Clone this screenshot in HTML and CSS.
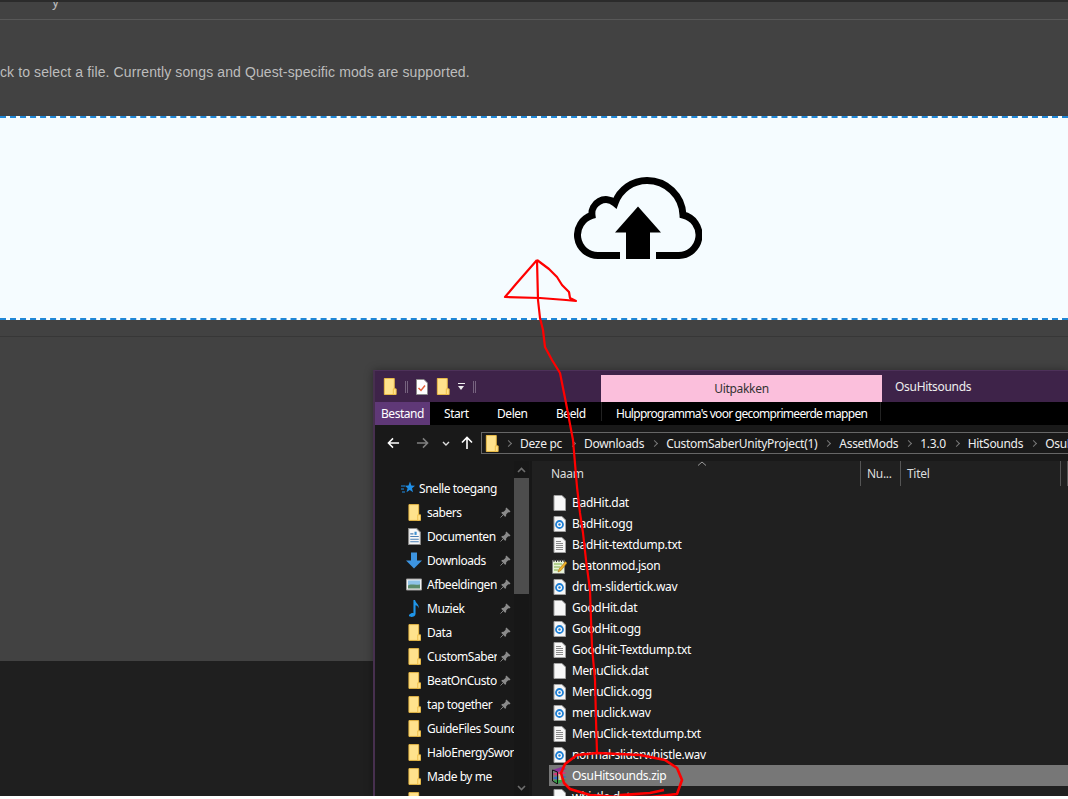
FILE: index.html
```html
<!DOCTYPE html>
<html>
<head>
  <title>Upload</title>
  <link rel="stylesheet" href="styles.css">
</head>
<body>
  <svg class="icon-defs">
    <symbol id="i-folder" viewBox="0 0 14 18">
      <path d="M1 .5h10.500v17H1z" fill="#ffe28c" stroke="#eebd45"/>
      <path d="M10.500 11.500h3v6h-3z" fill="#ffe28c" stroke="#eebd45"/>
    </symbol>
    <symbol id="i-blank" viewBox="0 0 14 16">
      <path d="M1.500.5h8l3.500 3.500v11.500h-11.500z" fill="#f7f7f7" stroke="#a0a0a0"/>
    </symbol>
    <symbol id="i-audio" viewBox="0 0 14 16">
      <path d="M1.500.5h8l3.500 3.500v11.500h-11.500z" fill="#f7f7f7" stroke="#a0a0a0"/>
      <circle cx="7" cy="8.500" r="3.500" fill="none" stroke="#1c7fd6" stroke-width="1.800"/>
      <circle cx="7" cy="8.500" r="1.200" fill="#1c7fd6"/>
    </symbol>
    <symbol id="i-text" viewBox="0 0 14 16">
      <path d="M1.500.5h8l3.500 3.500v11.500h-11.500z" fill="#f7f7f7" stroke="#a0a0a0"/>
      <path d="M3.500 4.500h5M3.500 6.500h7M3.500 8.500h7M3.500 10.500h7M3.500 12.500h7" stroke="#8a8a8a"/>
    </symbol>
    <symbol id="i-json" viewBox="0 0 15 16">
      <path d="M.5 2.500h12v13h-12z" fill="#e8f3d8" stroke="#7d7d7d"/>
      <path d="M2 1v3M4.500 1v3M7 1v3M9.500 1v3M12 1v3" stroke="#333"/>
      <path d="M2 6h8M2 9h6M2 12h4" stroke="#7fae45"/>
      <path d="M13.500 3.500 7 11l-1 3 3-1.500L15 5z" fill="#f0b429" stroke="#a06c10" stroke-width=".6"/>
    </symbol>
    <symbol id="i-rar" viewBox="0 0 16 17">
      <path d="M1 3l9-3 5 2-9 3z" fill="#8a2f9c"/>
      <path d="M1 7l9-3 5 2-9 3z" fill="#d8327a"/>
      <path d="M1 11l9-3 5 2-9 3z" fill="#2a6fd0"/>
      <path d="M1 14l9-3 5 2-9 4z" fill="#3aa04a"/>
      <path d="M1 3v11l5 3V5z" fill="none" stroke="#111"/>
      <path d="M7 7h3v6H7z" fill="#d9c28a"/>
    </symbol>
    <symbol id="i-doc" viewBox="0 0 12 16">
      <path d="M.5.5h7.500l3.500 3.500v11.500h-11z" fill="#f7f7f7" stroke="#8d8d8d"/>
      <path d="M2 5.500h3M2 8h8M2 10.500h8M2 13h8" stroke="#4a7fb5"/>
      <path d="M6 3.500h2v3h-2z" fill="#3b8ed0"/>
    </symbol>
    <symbol id="i-check" viewBox="0 0 12 16">
      <path d="M.5.5h7.500l3.500 3.500v11.500h-11z" fill="#fff" stroke="#8d8d8d"/>
      <path d="M2.500 9l2.500 2.500 4-5" fill="none" stroke="#e2603a" stroke-width="1.500"/>
    </symbol>
    <symbol id="i-pin" viewBox="0 0 12 12">
      <path d="M7 .5 11.500 5 10 6 9 5.800 6.800 8 6.600 10 5.500 10.500 1.500 6.500 2 5.400 4 5.200 6.200 3 6 2z" fill="#8a8a8a"/>
      <path d="M3.500 8.500.5 11.500" stroke="#8a8a8a"/>
    </symbol>
    <symbol id="i-star" viewBox="0 0 14 14">
      <path d="M9 .5l1.300 4 3.700.2-3 2.500 1 4-3.200-2.300-3.300 2.300 1.100-4-2.800-2.500 3.700-.2z" fill="#1f8fe8"/>
      <path d="M0 5h4M0 8h3M1 11h3" stroke="#1f8fe8"/>
    </symbol>
    <symbol id="i-down" viewBox="0 0 16 16">
      <path d="M5 0h6v8h5l-8 8-8-8h5z" fill="#3d94e0"/>
    </symbol>
    <symbol id="i-image" viewBox="0 0 16 12">
      <path d="M.5.5h15v11H.5z" fill="#f2f2f2" stroke="#9a9a9a"/>
      <path d="M2 2h12v5H2z" fill="#8fc3e8"/>
      <path d="M2 10V7c3-2 6 0 12-1v4z" fill="#5b8a6a"/>
    </symbol>
    <symbol id="i-music" viewBox="0 0 12 16">
      <path d="M5 0h1.500c.5 3 4 4 3.500 8-.5-2-2-3-3-3v8c0 2-2 3-4 3S0 14.500 1.500 13.500 4 12 5 12.500z" fill="#1f95e8"/>
    </symbol>
  </svg>

  <div class="page">
    <div class="top-strip"><span class="cut-word">y</span></div>
    <section class="panel">
      <p class="hint">ck to select a file. Currently songs and Quest-specific mods are supported.</p>
      <div class="dropzone">
        <svg class="cloud" viewBox="0 0 128 82">
          <path d="M46 78.500H24A20.500 20.500 0 0 1 18 38.400A14 14 0 0 1 41 26A34 34 0 0 1 73 3.500A36 36 0 0 1 109 38A20.500 20.500 0 0 1 104 78.500H82" fill="none" stroke="#000" stroke-width="7"/>
          <path d="M64 29.500 87 55.500H76V82H52V55.500H41z" fill="#000"/>
        </svg>
      </div>
      <div class="panel-rule"></div>
    </section>
    <div class="footer-band"></div>
  </div>

  <div class="explorer">
    <header class="titlebar">
      <div class="quick-bar">
        <svg class="ic-qa"><use href="#i-folder"/></svg>
        <span class="qa-sep"></span>
        <svg class="ic-qa-doc"><use href="#i-check"/></svg>
        <svg class="ic-qa"><use href="#i-folder"/></svg>
        <span class="qa-drop"></span>
        <span class="qa-sep"></span>
      </div>
      <div class="context-tab">Uitpakken</div>
      <div class="window-title">OsuHitsounds</div>
    </header>

    <nav class="ribbon">
      <span class="tab tab-file">Bestand</span>
      <span class="tab tab-start">Start</span>
      <span class="tab tab-share">Delen</span>
      <span class="tab tab-view">Beeld</span>
      <span class="tab tab-tools">Hulpprogramma's voor gecomprimeerde mappen</span>
    </nav>

    <div class="addressbar">
      <div class="nav-buttons">
        <svg class="nav-arrow" viewBox="0 0 14 12"><path d="M13 6H2M6.500 1 1.500 6l5 5" fill="none" stroke="#fff" stroke-width="1.600"/></svg>
        <svg class="nav-arrow nav-forward" viewBox="0 0 14 12"><path d="M1 6h11M7.500 1l5 5-5 5" fill="none" stroke="#808080" stroke-width="1.600"/></svg>
        <svg class="nav-more" viewBox="0 0 8 5"><path d="M1 1l3 3 3-3" fill="none" stroke="#ddd" stroke-width="1.400"/></svg>
        <svg class="nav-up" viewBox="0 0 12 14"><path d="M6 13V2M1 6.500l5-5 5 5" fill="none" stroke="#fff" stroke-width="1.600"/></svg>
      </div>
      <div class="crumbs">
        <svg class="ic-crumb"><use href="#i-folder"/></svg>
        <span class="chev"></span><span>Deze pc</span>
        <span class="chev"></span><span>Downloads</span>
        <span class="chev"></span><span>CustomSaberUnityProject(1)</span>
        <span class="chev"></span><span>AssetMods</span>
        <span class="chev"></span><span>1.3.0</span>
        <span class="chev"></span><span>HitSounds</span>
        <span class="chev"></span><span>OsuHitsounds</span>
      </div>
    </div>

    <div class="main">
      <aside class="sidebar">
        <ul class="tree">
          <li class="tree-row tree-head"><svg class="ic-star"><use href="#i-star"/></svg><span class="tree-label">Snelle toegang</span></li>
          <li class="tree-row"><svg class="ic-tree"><use href="#i-folder"/></svg><span class="tree-label">sabers</span><svg class="ic-pin"><use href="#i-pin"/></svg></li>
          <li class="tree-row"><svg class="ic-tree"><use href="#i-doc"/></svg><span class="tree-label">Documenten</span><svg class="ic-pin"><use href="#i-pin"/></svg></li>
          <li class="tree-row"><svg class="ic-tree ic-wide"><use href="#i-down"/></svg><span class="tree-label">Downloads</span><svg class="ic-pin"><use href="#i-pin"/></svg></li>
          <li class="tree-row"><svg class="ic-tree ic-wide"><use href="#i-image"/></svg><span class="tree-label">Afbeeldingen</span><svg class="ic-pin"><use href="#i-pin"/></svg></li>
          <li class="tree-row"><svg class="ic-tree"><use href="#i-music"/></svg><span class="tree-label">Muziek</span><svg class="ic-pin"><use href="#i-pin"/></svg></li>
          <li class="tree-row"><svg class="ic-tree"><use href="#i-folder"/></svg><span class="tree-label">Data</span><svg class="ic-pin"><use href="#i-pin"/></svg></li>
          <li class="tree-row"><svg class="ic-tree"><use href="#i-folder"/></svg><span class="tree-label">CustomSabers</span><svg class="ic-pin"><use href="#i-pin"/></svg></li>
          <li class="tree-row"><svg class="ic-tree"><use href="#i-folder"/></svg><span class="tree-label">BeatOnCustom</span><svg class="ic-pin"><use href="#i-pin"/></svg></li>
          <li class="tree-row"><svg class="ic-tree"><use href="#i-folder"/></svg><span class="tree-label">tap together</span><svg class="ic-pin"><use href="#i-pin"/></svg></li>
          <li class="tree-row"><svg class="ic-tree"><use href="#i-folder"/></svg><span class="tree-label">GuideFiles Sounds</span></li>
          <li class="tree-row"><svg class="ic-tree"><use href="#i-folder"/></svg><span class="tree-label">HaloEnergySword</span></li>
          <li class="tree-row"><svg class="ic-tree"><use href="#i-folder"/></svg><span class="tree-label">Made by me</span></li>
          <li class="tree-row"><svg class="ic-tree"><use href="#i-folder"/></svg><span class="tree-label"></span></li>
        </ul>
        <div class="tree-scroll">
          <svg class="scroll-arrow" viewBox="0 0 9 6"><path d="M1 5l3.500-3.500L8 5" fill="none" stroke="#6e6e6e" stroke-width="1.600"/></svg>
          <div class="scroll-thumb"></div>
          <svg class="scroll-arrow scroll-bottom" viewBox="0 0 9 6"><path d="M1 1l3.500 3.500L8 1" fill="none" stroke="#6e6e6e" stroke-width="1.600"/></svg>
        </div>
      </aside>

      <section class="files">
        <div class="file-head">
          <svg class="sort-mark" viewBox="0 0 10 5"><path d="M1 4.500 5 1l4 3.500" fill="none" stroke="#999"/></svg>
          <span class="col col-name">Naam</span>
          <span class="col col-num">Nu...</span>
          <span class="col col-title">Titel</span>
          <span class="col col-rest"></span>
        </div>
        <ul class="file-list">
          <li class="file-row"><svg class="ic-file"><use href="#i-blank"/></svg>BadHit.dat</li>
          <li class="file-row"><svg class="ic-file"><use href="#i-audio"/></svg>BadHit.ogg</li>
          <li class="file-row"><svg class="ic-file"><use href="#i-text"/></svg>BadHit-textdump.txt</li>
          <li class="file-row"><svg class="ic-file"><use href="#i-json"/></svg>beatonmod.json</li>
          <li class="file-row"><svg class="ic-file"><use href="#i-audio"/></svg>drum-slidertick.wav</li>
          <li class="file-row"><svg class="ic-file"><use href="#i-blank"/></svg>GoodHit.dat</li>
          <li class="file-row"><svg class="ic-file"><use href="#i-audio"/></svg>GoodHit.ogg</li>
          <li class="file-row"><svg class="ic-file"><use href="#i-text"/></svg>GoodHit-Textdump.txt</li>
          <li class="file-row"><svg class="ic-file"><use href="#i-blank"/></svg>MenuClick.dat</li>
          <li class="file-row"><svg class="ic-file"><use href="#i-audio"/></svg>MenuClick.ogg</li>
          <li class="file-row"><svg class="ic-file"><use href="#i-audio"/></svg>menuclick.wav</li>
          <li class="file-row"><svg class="ic-file"><use href="#i-text"/></svg>MenuClick-textdump.txt</li>
          <li class="file-row"><svg class="ic-file"><use href="#i-audio"/></svg>normal-sliderwhistle.wav</li>
          <li class="file-row file-selected"><svg class="ic-file ic-rar"><use href="#i-rar"/></svg>OsuHitsounds.zip</li>
          <li class="file-row"><svg class="ic-file"><use href="#i-blank"/></svg>whistle.dat</li>
        </ul>
      </section>
    </div>
  </div>

  <svg class="scribble" viewBox="0 0 1068 796">
    <path class="scribble-thin" d="M537 260 523 276 516 284 505 297 540 298 566 300 576 301 570 298 569 292 562 285 557 277 549 269 537 260"/>
    <path class="scribble-thin" d="M537 260 538 300 540 318 543 330 545 347 552 360 560 373 566 403 573 440 577 487 580 513 583 533 586 560 590 590 591 620 592 647 595 680 596 720 597 753"/>
    <path class="scribble-thick" d="M597 753 577 755 565 764 561 773 564 783 570 789 590 795 620 797 650 797 677 794 682 780 677 768 665 760 640 755 597 753M620 795 650 793 664 790"/>
  </svg>
</body>
</html>
```

FILE: styles.css
```css
html {
  background: #fff;
}
body {
  margin: 0;
  height: 796px;
  overflow: hidden;
  position: relative;
  font-family: "Liberation Sans", Arial, sans-serif;
}
ul {
  list-style: none;
  margin: 0;
  padding: 0;
}
.icon-defs {
  position: absolute;
  width: 0;
  height: 0;
}

/* page behind the window */
.page {
  height: 796px;
  display: flex;
  flex-direction: column;
  background: #1f1f1f;
}
.top-strip {
  height: 17px;
  padding-left: 52px;
  border-top: 2px solid #2b2b2b;
  border-bottom: 1px solid #585858;
  background: #424242;
  overflow: hidden;
  font-size: 14px;
  line-height: 0;
  color: #bbb;
}
.cut-word {
  line-height: 0;
}
.panel {
  height: 641px;
  background: #424242;
}
.hint {
  margin: 0;
  height: 96px;
  box-sizing: border-box;
  padding-top: 44px;
  font-size: 14px;
  line-height: 16px;
  letter-spacing: 0.11px;
  color: #bdbdbd;
}
.dropzone {
  height: 204px;
  box-sizing: border-box;
  display: flex;
  align-items: center;
  padding-left: 574px;
  background: #f5fcff;
  border-top: 2px dashed #1f87d6;
  border-bottom: 2px dashed #1f87d6;
}
.cloud {
  width: 128px;
  height: 82px;
}
.panel-rule {
  height: 1px;
  margin-top: 16px;
  background: #373737;
}
.footer-band {
  flex: 1;
}

/* explorer window */
.explorer {
  position: absolute;
  left: 373px;
  top: 370px;
  right: 0;
  bottom: 0;
  box-sizing: border-box;
  border-left: 2px solid #47304f;
  border-top: 1px solid #4d3159;
  background: #191919;
  box-shadow: 0 0 8px rgba(0, 0, 0, 0.35);
  font-family: "Noto Sans", sans-serif;
  font-size: 12px;
  letter-spacing: -0.3px;
  color: #fff;
  display: flex;
  flex-direction: column;
}
.titlebar {
  height: 31px;
  flex: none;
  display: flex;
  background: #3e2349;
}
.quick-bar {
  width: 226px;
  flex: none;
  box-sizing: border-box;
  padding-left: 8px;
  display: flex;
  align-items: center;
  gap: 8px;
}
.ic-qa {
  width: 14px;
  height: 17px;
}
.ic-qa-doc {
  width: 12px;
  height: 16px;
}
.qa-sep {
  width: 1px;
  height: 12px;
  border: 1px solid #76637f;
  border-width: 0 1px;
}
.qa-drop {
  width: 7px;
  height: 7px;
  border-top: 1px solid #eee;
  position: relative;
}
.qa-drop::after {
  content: "";
  position: absolute;
  left: 0;
  top: 2px;
  border: 3.500px solid transparent;
  border-top: 4px solid #eee;
}
.context-tab {
  width: 281px;
  flex: none;
  margin-top: 4px;
  background: #fbbfdc;
  color: #333;
  text-align: center;
  line-height: 28px;
}
.window-title {
  padding: 6px 0 0 13px;
  line-height: 20px;
  color: #eee;
}
.ribbon {
  height: 23px;
  flex: none;
  display: flex;
  background: #000;
  line-height: 23px;
  letter-spacing: -0.45px;
}
.tab {
  white-space: nowrap;
}
.tab-file {
  width: 55px;
  text-align: center;
  background: #5f3877;
}
.tab-start {
  margin-left: 14px;
  width: 53px;
}
.tab-share {
  width: 59px;
}
.tab-view {
  width: 45px;
}
.tab-tools {
  width: 280px;
  padding-left: 14px;
  box-sizing: border-box;
  height: 19px;
  border: 1px solid #222;
  border-width: 0 1px;
  letter-spacing: -0.72px;
}
.addressbar {
  height: 36px;
  flex: none;
  display: flex;
  align-items: center;
}
.nav-buttons {
  width: 106px;
  flex: none;
  display: flex;
  align-items: center;
  padding-left: 12px;
  box-sizing: border-box;
}
.nav-arrow {
  width: 13px;
  height: 12px;
}
.nav-forward {
  margin-left: 16px;
}
.nav-more {
  width: 8px;
  height: 5px;
  margin-left: 13px;
}
.nav-up {
  width: 12px;
  height: 14px;
  margin-left: 11px;
}
.crumbs {
  flex: 1;
  height: 22px;
  min-width: 0;
  box-sizing: border-box;
  border: 1px solid #666;
  border-right: 0;
  padding-left: 3px;
  display: flex;
  align-items: center;
  gap: 8px;
  overflow: hidden;
  white-space: nowrap;
  color: #eee;
}
.ic-crumb {
  width: 14px;
  height: 17px;
  flex: none;
  margin-right: -1px;
}
.chev {
  flex: none;
  width: 4px;
  height: 4px;
  margin-right: 1px;
  border: solid #777;
  border-width: 1px 1px 0 0;
  transform: rotate(45deg);
}
.main {
  flex: 1;
  min-height: 0;
  display: flex;
}

/* left tree */
.sidebar {
  width: 157px;
  flex: none;
  display: flex;
  border-right: 2px solid #171717;
  box-sizing: border-box;
}
.tree {
  width: 139px;
  flex: none;
  padding-top: 15px;
  overflow: hidden;
  letter-spacing: -0.45px;
}
.tree-row {
  height: 24px;
  padding-left: 33px;
  display: flex;
  align-items: center;
}
.tree-head {
  padding-left: 26px;
}
.ic-star {
  width: 14px;
  height: 14px;
  flex: none;
  margin-right: 4px;
}
.ic-tree {
  width: 13px;
  height: 17px;
  flex: none;
  margin-right: 6px;
}
.ic-wide {
  width: 16px;
  margin-left: -2px;
  margin-right: 5px;
}
.tree-label {
  flex: 1;
  min-width: 0;
  overflow: hidden;
  white-space: nowrap;
}
.ic-pin {
  width: 11px;
  height: 11px;
  flex: none;
  margin: 0 3px 0 3px;
}
.tree-scroll {
  width: 15px;
  flex: none;
  display: flex;
  flex-direction: column;
  align-items: center;
  background: #171717;
  padding-top: 6px;
  box-sizing: border-box;
}
.scroll-arrow {
  width: 9px;
  height: 6px;
  flex: none;
}
.scroll-thumb {
  width: 100%;
  height: 116px;
  margin-top: 5px;
  background: #4d4d4d;
}
.scroll-bottom {
  margin-top: auto;
  margin-bottom: 5px;
}

/* file list */
.files {
  flex: 1;
  min-width: 0;
  background: #202020;
  overflow: hidden;
}
.file-head {
  height: 25px;
  display: flex;
  position: relative;
  line-height: 25px;
  color: #ddd;
}
.sort-mark {
  position: absolute;
  left: 165px;
  top: 0;
  width: 10px;
  height: 5px;
}
.col {
  box-sizing: border-box;
  flex: none;
  border-right: 1px solid #555;
  padding-left: 6px;
}
.col-name {
  width: 329px;
  padding-left: 19px;
}
.col-num {
  width: 40px;
}
.col-title {
  width: 160px;
}
.file-list {
  padding: 6px 0 0 17px;
}
.file-row {
  height: 21px;
  line-height: 21px;
  display: flex;
  align-items: center;
  white-space: nowrap;
  color: #fff;
}
.ic-file {
  width: 15px;
  height: 16px;
  flex: none;
  margin: 0 5px 0 3px;
}
.ic-rar {
  width: 17px;
  height: 17px;
  margin: 0 4px 0 2px;
}
.file-selected {
  background: #777;
}

.scribble {
  position: absolute;
  left: 0;
  top: 0;
  width: 1068px;
  height: 796px;
  pointer-events: none;
}
.scribble path {
  fill: none;
  stroke: #f00;
  stroke-linejoin: round;
}
.scribble-thin {
  stroke-width: 2.200;
}
.scribble-thick {
  stroke-width: 2.600;
}
```
